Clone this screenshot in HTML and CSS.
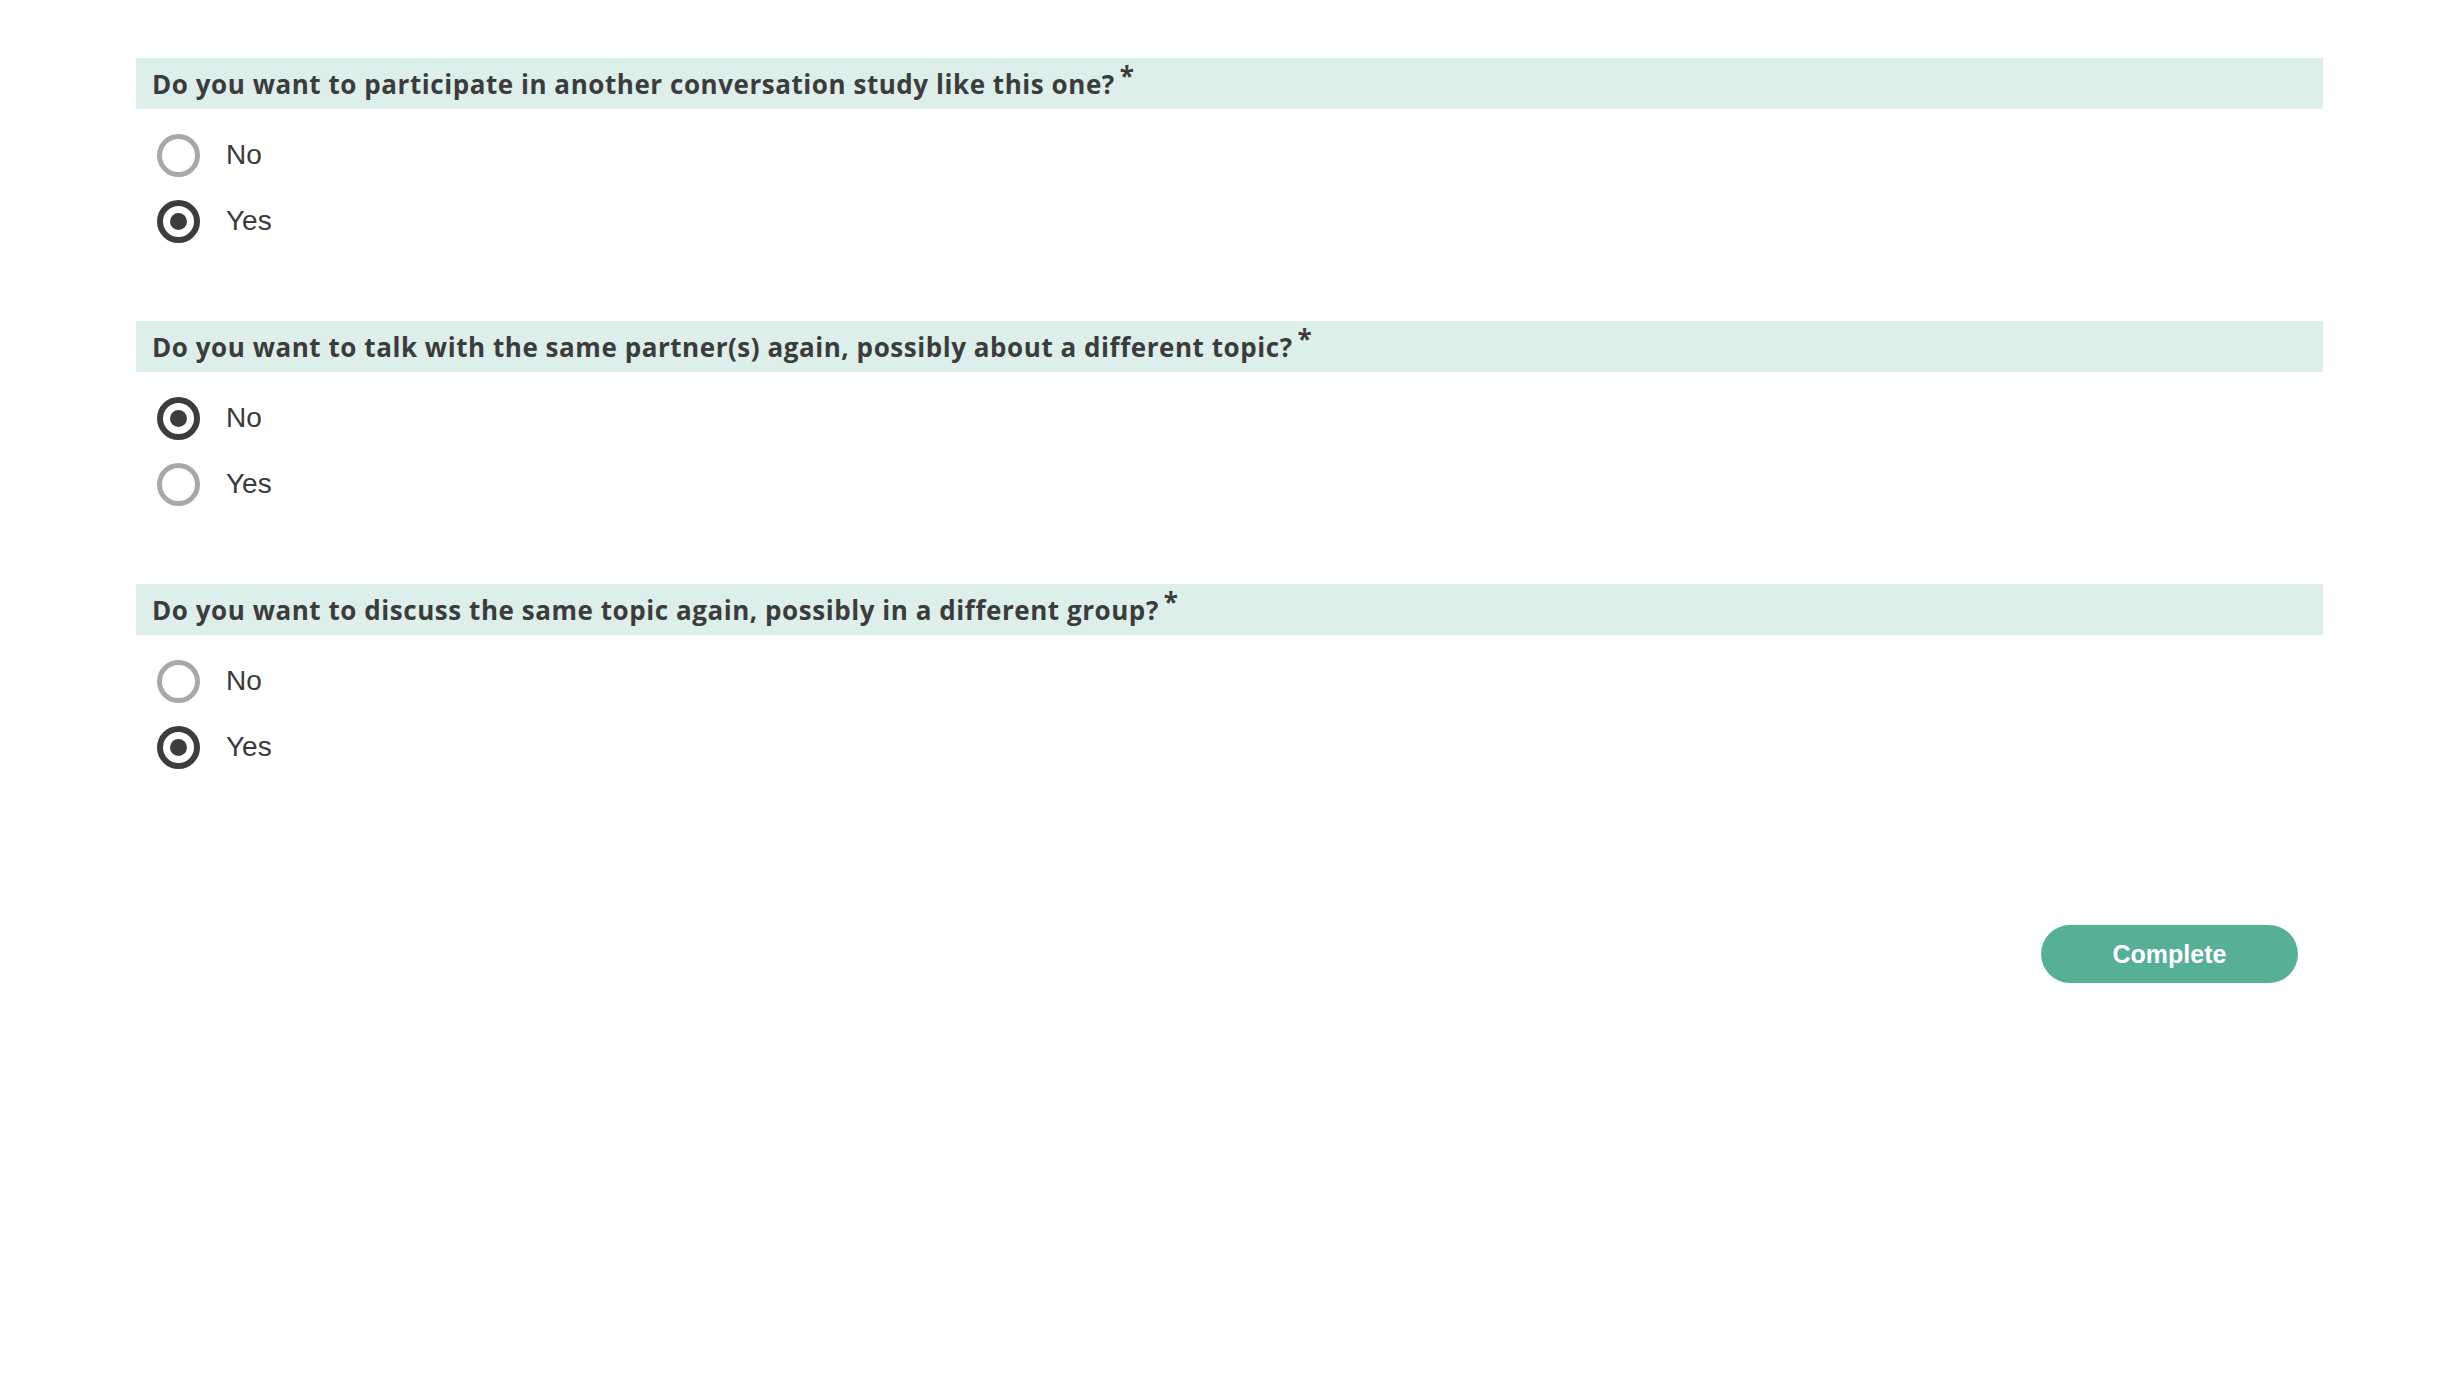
FILE: index.html
```html
<!DOCTYPE html>
<html lang="en">
<head>
<meta charset="utf-8">
<title>Survey</title>
<link rel="stylesheet" href="styles.css">
</head>
<body>
<main class="survey">
  <section class="question">
    <h2 class="question-title">Do you want to participate in another conversation study like this one?<span class="req">*</span></h2>
    <div class="options">
      <label class="option"><span class="radio"></span><span class="option-text">No</span></label>
      <label class="option"><span class="radio checked"></span><span class="option-text">Yes</span></label>
    </div>
  </section>
  <section class="question">
    <h2 class="question-title">Do you want to talk with the same partner(s) again, possibly about a different topic?<span class="req">*</span></h2>
    <div class="options">
      <label class="option"><span class="radio checked"></span><span class="option-text">No</span></label>
      <label class="option"><span class="radio"></span><span class="option-text">Yes</span></label>
    </div>
  </section>
  <section class="question">
    <h2 class="question-title">Do you want to discuss the same topic again, possibly in a different group?<span class="req">*</span></h2>
    <div class="options">
      <label class="option"><span class="radio"></span><span class="option-text">No</span></label>
      <label class="option"><span class="radio checked"></span><span class="option-text">Yes</span></label>
    </div>
  </section>
  <div class="actions">
    <button class="complete-btn" type="button">Complete</button>
  </div>
</main>
</body>
</html>
```

FILE: styles.css
```css
html, body {
  margin: 0;
  padding: 0;
  background: #ffffff;
}

.survey {
  width: 2187px;
  margin: 0 auto;
  padding-top: 58px;
  box-sizing: border-box;
}

.question {
  margin-bottom: 67px;
}

.question-title {
  margin: 0;
  height: 51px;
  box-sizing: border-box;
  padding: 0 16px;
  display: flex;
  align-items: center;
  background: #dcefea;
  color: #3c3c3c;
  font-family: "Open Sans", "Lato", sans-serif;
  font-weight: 700;
  font-size: 26px;
  letter-spacing: 0.55px;
  line-height: 1;
  white-space: nowrap;
}

.req {
  font-size: 26px;
  letter-spacing: 0;
  align-self: flex-start;
  margin-top: 5px;
  margin-left: 5px;
}

.options {
  padding-top: 13px;
  display: flex;
  flex-direction: column;
}

.option {
  height: 66px;
  display: flex;
  align-items: center;
  padding-left: 21px;
  font-family: "Liberation Sans", Arial, sans-serif;
  font-size: 28px;
  color: #3a3a3a;
}

.radio {
  width: 43px;
  height: 43px;
  box-sizing: border-box;
  border-radius: 50%;
  border: 5px solid #a8a8a8;
  margin-right: 26px;
  display: flex;
  align-items: center;
  justify-content: center;
  flex: none;
}

.radio.checked {
  border: 6px solid #3c3c3c;
}

.radio.checked::after {
  content: "";
  width: 17px;
  height: 17px;
  border-radius: 50%;
  background: #3c3c3c;
}

.actions {
  display: flex;
  justify-content: flex-end;
  padding-right: 25px;
  padding-top: 78px;
}

.complete-btn {
  width: 257px;
  height: 58px;
  border: none;
  border-radius: 29px;
  background: #55b095;
  color: #ffffff;
  font-family: "Liberation Sans", Arial, sans-serif;
  font-weight: 700;
  font-size: 25px;
  cursor: pointer;
}
```
